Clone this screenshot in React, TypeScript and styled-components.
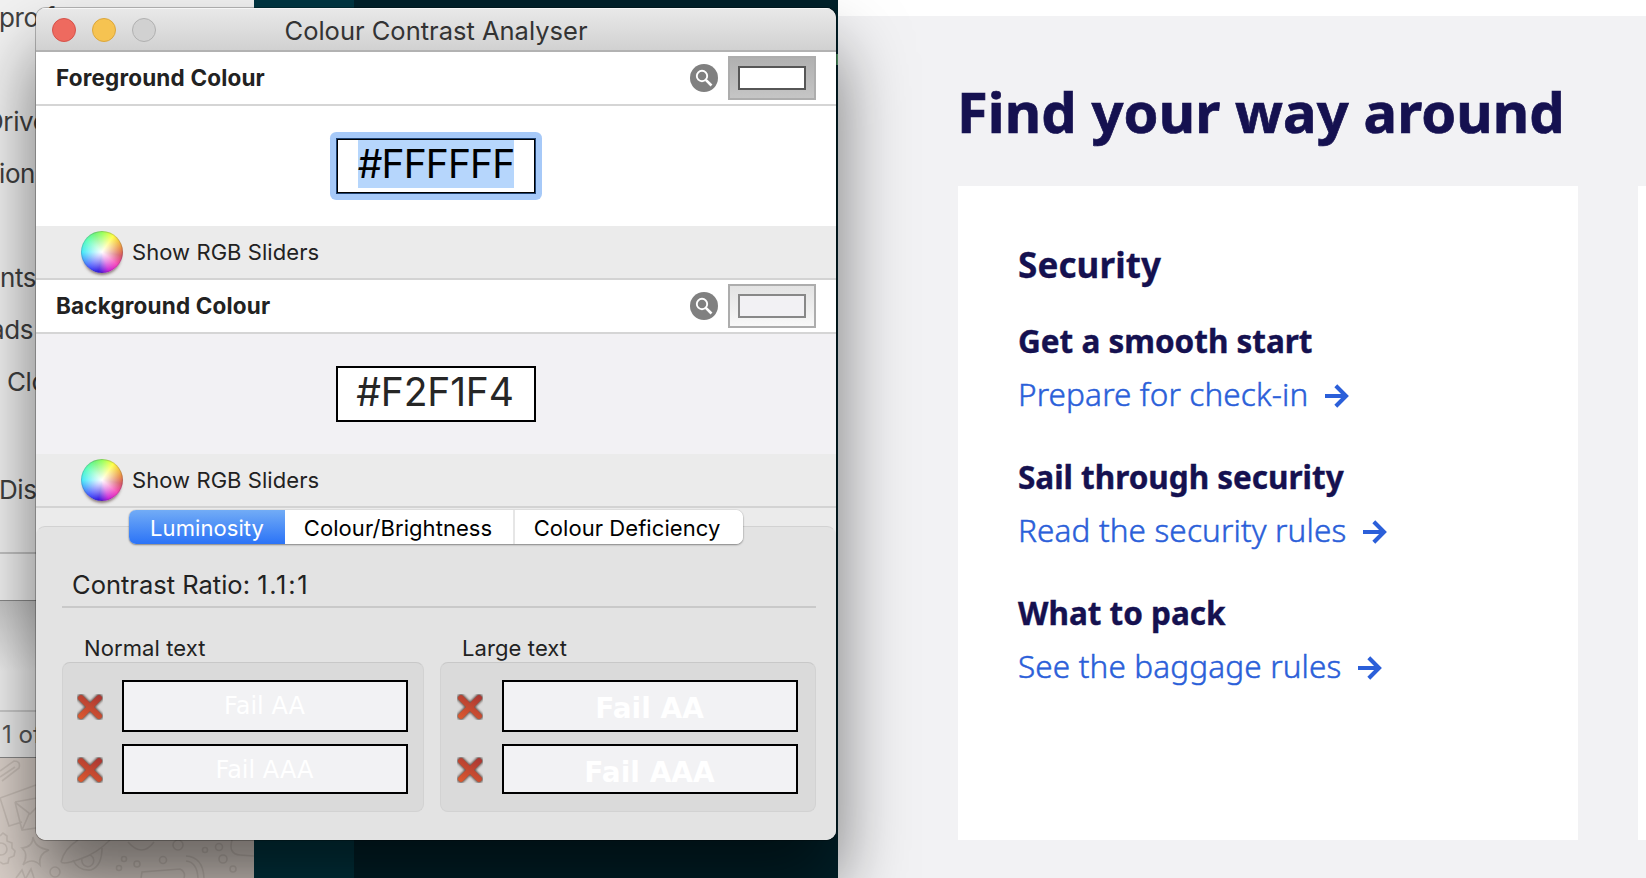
import React from "react";
import styled, { createGlobalStyle } from "styled-components";

const GlobalStyle = createGlobalStyle`
  * { box-sizing: border-box; }
  body { margin: 0; overflow: hidden; background: #001a21; }
`;

const sans = `Inter, Roboto, "Liberation Sans", sans-serif`;
const brand = `"Noto Sans", "Open Sans", sans-serif`;

const Desktop = styled.main`
  position: relative;
  width: 1646px;
  height: 878px;
  overflow: hidden;
  display: flex;
  background: #001c24;
  font-family: ${sans};
`;

const BackLeft = styled.div`
  width: 254px;
  height: 878px;
  display: flex;
  flex-direction: column;
  overflow: hidden;
`;

const FinderWindow = styled.div`
  height: 758px;
  display: flex;
  flex-direction: column;
  background: #ececec;
`;

const Places = styled.div`
  height: 552px;
  background: #f2f2f2;
`;

const Place = styled.div<{ $x: number; $h: number }>`
  height: ${(p) => p.$h}px;
  margin-left: ${(p) => p.$x}px;
  font-size: 26px;
  line-height: 35px;
  letter-spacing: -0.4px;
  white-space: nowrap;
  color: #404040;
`;

const Footer = styled.div`
  height: 49px;
  border-top: 2px solid #c4c4c4;
  border-bottom: 1px solid #8a8a8a;
  background: #f3f3f3;
`;

const PanelBelow = styled.div`
  height: 109px;
  background: linear-gradient(#c9c9c9, #f2f2f2 65%);
`;

const StatusBar = styled.div`
  height: 48px;
  border-top: 2px solid #cccccc;
  border-bottom: 1px solid #888;
  padding-left: 2px;
  font-size: 24px;
  line-height: 46px;
  color: #555;
  background: #eeeeee;
`;

const Wallpaper = styled.div`
  height: 120px;
  background: #ddd3cc;
  svg { display: block; }
`;

const DarkStrip = styled.div`
  width: 100px;
  background: #003642;
`;

const DarkPanel = styled.div`
  width: 484px;
  padding-top: 54px;
  background: #00212a;
`;

const DarkPanelMark = styled.div`
  width: 4px;
  height: 11px;
  margin-left: auto;
  background: #4f9466;
`;

const Page = styled.section`
  width: 808px;
  border-top: 16px solid #fff;
  background: #f2f2f4;
  padding-left: 120px;
  font-family: ${brand};
  color: #151150;
`;

const PageTitle = styled.h1`
  margin: 0 0 0 -1px;
  height: 170px;
  padding-top: 59px;
  font-size: 56px;
  line-height: 72px;
  font-weight: 700;
  letter-spacing: 0.12px;
  -webkit-text-stroke: 0.7px #151150;
  white-space: nowrap;
`;

const Cards = styled.div`
  display: flex;
  gap: 60px;
`;

const Card = styled.article`
  flex: none;
  width: 620px;
  height: 654px;
  padding: 55px 60px 0;
  background: #fff;
`;

const CardTitle = styled.h2`
  margin: 0;
  height: 78px;
  font-size: 35px;
  line-height: 48px;
  font-weight: 700;
  letter-spacing: 0.1px;
  -webkit-text-stroke: 0.3px #151150;
`;

const Topic = styled.div`
  height: 136px;
`;

const TopicTitle = styled.h3`
  margin: 0;
  font-size: 31.5px;
  line-height: 43px;
  height: 54px;
  font-weight: 700;
  letter-spacing: -0.02px;
  -webkit-text-stroke: 0.4px #151150;
  white-space: nowrap;
`;

const TopicLink = styled.a`
  display: flex;
  align-items: center;
  gap: 16px;
  height: 42px;
  font-size: 31.5px;
  line-height: 42px;
  font-weight: 300;
  letter-spacing: 0.13px;
  -webkit-text-stroke: 0.5px #2b5fd9;
  white-space: nowrap;
  color: #2b5fd9;
  svg { margin-top: 4px; }
`;

const AppWindow = styled.div`
  position: absolute;
  left: 36px;
  top: 8px;
  width: 800px;
  height: 832px;
  border-radius: 10px;
  overflow: hidden;
  background: #ebebeb;
  color: #222;
`;

const WindowShadow = styled.div`
  position: absolute;
  left: 36px;
  top: 8px;
  width: 800px;
  height: 832px;
  border-radius: 10px;
  box-shadow: 0 0 0 1px rgba(0, 0, 0, 0.25), 0 44px 70px 2px rgba(0, 0, 0, 0.52);
`;

const TitleBar = styled.header`
  display: grid;
  grid-template-columns: 140px 1fr 140px;
  align-items: center;
  height: 44px;
  border-bottom: 2px solid #b2b2b2;
  background: linear-gradient(#e9e9e9, #d1d1d1);
  box-shadow: inset 0 1px 0 #f6f6f6;
`;

const Lights = styled.div`
  display: flex;
  gap: 16px;
  padding: 2px 0 0 16px;
`;

const Light = styled.span<{ $fill: string; $edge: string }>`
  width: 24px;
  height: 24px;
  border-radius: 50%;
  border: 1px solid ${(p) => p.$edge};
  background: ${(p) => p.$fill};
`;

const WindowTitle = styled.div`
  padding-top: 4px;
  text-align: center;
  font-size: 25.5px;
  line-height: 38px;
  color: #333;
`;

const SectionHead = styled.div`
  display: flex;
  align-items: center;
  height: 54px;
  padding: 0 20px;
  border-bottom: 2px solid #d5d5d5;
  background: #fff;
`;

const SectionTitle = styled.div`
  flex: 1;
  font-size: 22.5px;
  line-height: 30px;
  font-weight: 700;
  letter-spacing: 0.17px;
`;

const ColourWell = styled.div<{ $active: boolean; $colour: string }>`
  display: flex;
  width: 88px;
  height: 44px;
  margin-left: 10px;
  padding: 8px;
  border: 2px solid #adadad;
  background: ${(p) =>
    p.$active ? "linear-gradient(#b0b0b0, #c5c5c5)" : "linear-gradient(#e3e3e3, #f8f8f8)"};

  &::after {
    content: "";
    flex: 1;
    border: 2px solid ${(p) => (p.$active ? "#565656" : "#888")};
    background: ${(p) => p.$colour};
  }
`;

const HexPanel = styled.div<{ $colour: string }>`
  display: flex;
  justify-content: center;
  height: 120px;
  padding-top: 32px;
  background: ${(p) => p.$colour};
`;

const FocusRing = styled.div<{ $focus: boolean }>`
  height: 56px;
  ${(p) => p.$focus && `box-shadow: 0 0 0 6px #a6c9f8; border-radius: 2px;`}
`;

const HexField = styled.div<{ $focus: boolean }>`
  display: flex;
  justify-content: center;
  width: 200px;
  height: 56px;
  border: 2px solid #000;
  background: #fff;
  ${(p) =>
    p.$focus &&
    `border: 1px solid #1f4272; padding-top: 1px; box-shadow: inset 0 0 0 1px #000;`}
`;

const HexText = styled.span<{ $focus: boolean }>`
  height: 48px;
  margin-left: ${(p) => (p.$focus ? 0 : -2)}px;
  font-size: 39px;
  line-height: 48px;
  letter-spacing: ${(p) => (p.$focus ? -0.9 : -0.15)}px;
  color: ${(p) => (p.$focus ? "#000" : "#262626")};
  background: ${(p) => (p.$focus ? "#b6d6fc" : "transparent")};
`;

const SliderRow = styled.div`
  display: flex;
  align-items: center;
  gap: 9px;
  height: 54px;
  padding-left: 45px;
  border-bottom: 2px solid #d3d3d3;
  background: #ebebeb;
  font-size: 22px;
  letter-spacing: 0.06px;
`;

const Wheel = styled.span`
  width: 42px;
  height: 42px;
  border-radius: 50%;
  border: 1px solid rgba(90, 80, 110, 0.25);
  background:
    radial-gradient(circle, #fff 0%, rgba(255, 255, 255, 0.65) 25%, rgba(255, 255, 255, 0) 70%),
    conic-gradient(#8cff50, #ffff38 35deg, #e58038 80deg, #d24e58 100deg, #f53ab4 130deg, #c818d2 160deg, #2a10e0 190deg, #4050ff 220deg, #3ce8f8 270deg, #50ffb0 310deg, #6cf56c 340deg, #8cff50);
  background-origin: border-box;
  box-shadow: 0 4px 3px -2px rgba(60, 30, 30, 0.55);
`;

const TabArea = styled.div`
  display: flex;
  flex-direction: column;
  align-items: stretch;
  height: 332px;
  padding-top: 2px;
`;

const TabBar = styled.nav`
  z-index: 1;
  align-self: flex-start;
  display: flex;
  width: 614px;
  height: 34px;
  margin-left: 93px;
  border-radius: 7px;
  box-shadow: 0 1px 2px rgba(0, 0, 0, 0.4), 0 0 1px rgba(0, 0, 0, 0.35);
  background: #fff;
  overflow: hidden;
`;

const Tab = styled.button<{ $w: number; $on?: boolean }>`
  width: ${(p) => p.$w}px;
  padding: 2px ${(p) => (p.$on ? 0 : 4)}px 0 0;
  border: 0;
  border-left: ${(p) => (p.$on ? "0" : "2px solid #e6e6e6")};
  font-family: ${sans};
  font-size: 22px;
  line-height: 32px;
  letter-spacing: 0.06px;
  white-space: nowrap;
  color: ${(p) => (p.$on ? "#fff" : "#000")};
  background: ${(p) => (p.$on ? "linear-gradient(#72acf6, #2b73f7)" : "#fff")};

  &:nth-child(2) { border-left-color: #fff; }
`;

const Results = styled.section`
  height: 314px;
  margin-top: -18px;
  padding: 42px 19px 0 25px;
  border: 1px solid;
  border-color: #d2d2d2 #e3e3e3;
  border-bottom: 0;
  border-radius: 9px 9px 0 0;
  background: #e3e3e3;
`;

const Ratio = styled.div`
  height: 39px;
  padding-left: 10px;
  border-bottom: 2px solid #c9c9c9;
  font-size: 25.5px;
  line-height: 32px;
`;

const RatioValue = styled.span`
  letter-spacing: 1.7px;
`;

const Groups = styled.div`
  display: flex;
  gap: 16px;
  padding-top: 25px;
`;

const Group = styled.div<{ $w: number }>`
  width: ${(p) => p.$w}px;
`;

const GroupLabel = styled.div`
  height: 29px;
  padding-left: 22px;
  font-size: 22px;
  line-height: 30px;
  letter-spacing: 0.1px;
`;

const GroupBox = styled.div<{ $large: boolean }>`
  display: flex;
  flex-direction: column;
  gap: 12px;
  height: 150px;
  padding: ${(p) => (p.$large ? "17px 17px 0 14px" : "17px 15px 0 12px")};
  border: 1px solid #d2d2d2;
  border-top-color: #c8c8c8;
  border-radius: 8px;
  background: #dadada;
`;

const Check = styled.div<{ $h: number }>`
  display: flex;
  align-items: center;
  height: ${(p) => p.$h}px;
  svg { flex: none; margin-right: 17px; margin-top: 1px; }
`;

const Sample = styled.div<{ $large: boolean }>`
  flex: 1;
  align-self: stretch;
  border: 2px solid #000;
  background: #f2f2f4;
  color: #fff;
  text-align: center;
  text-indent: -1px;
  font-family: "DejaVu Sans", sans-serif;
  font-size: ${(p) => (p.$large ? 28 : 24)}px;
  font-weight: ${(p) => (p.$large ? 700 : 400)};
  line-height: ${(p) => (p.$large ? 53 : 49)}px;
`;

const Magnifier = () => (
  <svg width="28" height="28" viewBox="0 0 28 28">
    <circle cx="14" cy="14" r="14" fill="#808080" />
    <circle cx="12" cy="12" r="5.2" fill="none" stroke="#fff" strokeWidth="1.9" />
    <path d="M15.8 15.8 L21.5 21.5" stroke="#fff" strokeWidth="2.6" />
  </svg>
);

const Cross = () => (
  <svg width="30" height="30" viewBox="0 0 30 30">
    <defs>
      <linearGradient id="crossFill" gradientUnits="userSpaceOnUse" x1="22" y1="3" x2="8" y2="27">
        <stop offset="0" stopColor="#ac3833" />
        <stop offset="1" stopColor="#d9582f" />
      </linearGradient>
      <filter id="crossSoft" x="-20%" y="-20%" width="140%" height="140%">
        <feGaussianBlur stdDeviation="0.9" />
      </filter>
    </defs>
    <path d="M6 6 L24 24 M24 6 L6 24" stroke="#65554f" strokeWidth="8" strokeLinecap="round" filter="url(#crossSoft)" />
    <path d="M6 6 L24 24 M24 6 L6 24" stroke="url(#crossFill)" strokeWidth="5.8" strokeLinecap="round" />
  </svg>
);

const Arrow = () => (
  <svg width="26" height="26" viewBox="0 0 26 26" fill="none" stroke="#2b5fd9" strokeWidth="4.1">
    <path d="M1 13 H22.5 M11.8 2.8 L22 13 L11.8 23.2" />
  </svg>
);

const Doodles = () => (
  <svg width="254" height="120" viewBox="0 0 254 120" fill="none" stroke="#7d726b" strokeOpacity="0.2" strokeWidth="1.6">
    <path d="M0 13 L14 3 Q21 3 19 10 L2 23 M0 19 L15 9" />
    <path d="M0 40 L36 27 M0 40 L9 68 L22 64 M15 44 L48 38 M15 44 L22 72 L50 68 M16 45 L30 56 L38 48 M22 72 L29 56" />
    <path d="M0 78 l3 -3 4 3 0 5 5 2 0 5 3 3 -1 5 -5 2 -1 5 -5 1 -3 -2" />
    <circle cx="1" cy="91" r="6" />
    <path d="M33 79 Q35 90 49 92 Q38 96 40 107 Q32 99 23 107 Q29 96 22 90 Q33 89 33 79Z" />
    <path d="M61 104 Q64 91 78 82 M61 104 Q64 107 80 101 Q96 96 110 82 M73 102 Q78 113 91 112 Q102 108 102 90 M82 101 a6 6 0 1 0 8 -4" />
    <circle cx="55" cy="114" r="5" /><circle cx="124" cy="101" r="2.5" /><circle cx="119" cy="110" r="2.5" />
    <circle cx="137" cy="106" r="3" /><circle cx="163" cy="102" r="3.5" /><circle cx="178" cy="87" r="5" />
    <circle cx="205" cy="92" r="2.5" /><circle cx="219" cy="89" r="3.5" /><circle cx="223" cy="101" r="4" />
    <circle cx="233" cy="111" r="3" />
    <path d="M128 84 Q142 100 154 84 M186 98 Q203 99 204 120 M186 103 Q197 104 198 120 M141 120 L142 114 L180 111 Q186 114 184 120 M232 82 Q228 96 240 97 L254 98 M16 120 L22 112 L25 120 M26 120 L31 111 L34 120" />
  </svg>
);

const places = [
  { text: "pro f  t", x: -1, h: 104 },
  { text: "Drive", x: -15, h: 52 },
  { text: "ions", x: -1, h: 104 },
  { text: "nts", x: 0, h: 52 },
  { text: "ads", x: -10, h: 52 },
  { text: "Cloud", x: 7, h: 108 },
  { text: "Disc", x: -1, h: 50 },
];

const topics = [
  { title: "Get a smooth start", link: "Prepare for check-in" },
  { title: "Sail through security", link: "Read the security rules" },
  { title: "What to pack", link: "See the baggage rules" },
];

const ColourSection = ({ title, colour, active }: { title: string; colour: string; active: boolean }) => (
  <>
    <SectionHead>
      <SectionTitle>{title}</SectionTitle>
      <Magnifier />
      <ColourWell $active={active} $colour={colour} />
    </SectionHead>
    <HexPanel $colour={colour}>
      <FocusRing $focus={active}>
        <HexField $focus={active}>
          <HexText $focus={active}>{colour}</HexText>
        </HexField>
      </FocusRing>
    </HexPanel>
    <SliderRow>
      <Wheel />
      Show RGB Sliders
    </SliderRow>
  </>
);

const ResultGroup = ({ label, width, large }: { label: string; width: number; large: boolean }) => (
  <Group $w={width}>
    <GroupLabel>{label}</GroupLabel>
    <GroupBox $large={large}>
      <Check $h={52}><Cross /><Sample $large={large}>Fail AA</Sample></Check>
      <Check $h={50}><Cross /><Sample $large={large}>Fail AAA</Sample></Check>
    </GroupBox>
  </Group>
);

export default function App() {
  return (
    <Desktop>
      <GlobalStyle />
      <BackLeft>
        <FinderWindow>
          <Places>
            {places.map((p) => (
              <Place key={p.text} $x={p.x} $h={p.h}>{p.text}</Place>
            ))}
          </Places>
          <Footer />
          <PanelBelow />
          <StatusBar>1 of</StatusBar>
        </FinderWindow>
        <Wallpaper><Doodles /></Wallpaper>
      </BackLeft>
      <DarkStrip />
      <DarkPanel><DarkPanelMark /></DarkPanel>
      <Page>
        <PageTitle>Find your way around</PageTitle>
        <Cards>
          <Card>
            <CardTitle>Security</CardTitle>
            {topics.map((t) => (
              <Topic key={t.title}>
                <TopicTitle>{t.title}</TopicTitle>
                <TopicLink>{t.link}<Arrow /></TopicLink>
              </Topic>
            ))}
          </Card>
          <Card />
        </Cards>
      </Page>
      <WindowShadow />
      <AppWindow>
        <TitleBar>
          <Lights>
            <Light $fill="#ee6a5f" $edge="#d5524a" />
            <Light $fill="#f6c351" $edge="#dba63c" />
            <Light $fill="#d1d1d1" $edge="#b0b0b0" />
          </Lights>
          <WindowTitle>Colour Contrast Analyser</WindowTitle>
        </TitleBar>
        <ColourSection title="Foreground Colour" colour="#FFFFFF" active />
        <ColourSection title="Background Colour" colour="#F2F1F4" active={false} />
        <TabArea>
          <TabBar>
            <Tab $w={156} $on>Luminosity</Tab>
            <Tab $w={228}>Colour/Brightness</Tab>
            <Tab $w={230}>Colour Deficiency</Tab>
          </TabBar>
          <Results>
            <Ratio>Contrast Ratio: <RatioValue>1.1:1</RatioValue></Ratio>
            <Groups>
              <ResultGroup label="Normal text" width={362} large={false} />
              <ResultGroup label="Large text" width={376} large />
            </Groups>
          </Results>
        </TabArea>
      </AppWindow>
    </Desktop>
  );
}
